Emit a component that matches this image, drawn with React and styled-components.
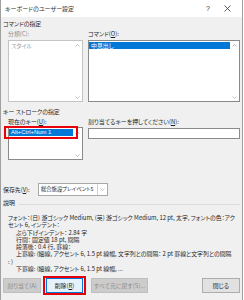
import React from "react";
import styled, { createGlobalStyle } from "styled-components";

const Global = createGlobalStyle`
  body {
    margin: 0;
    background: #ffffff;
  }
`;

// 다이얼로그 전체 틀
const Dialog = styled.div`
  width: 243px;
  height: 300px;
  box-sizing: border-box;
  display: flex;
  flex-direction: column;
  background: #f0f0f0;
  border-left: 1px solid #a0a0a0;
  border-right: 1px solid #a0a0a0;
  font-family: "Noto Sans CJK JP", "Noto Sans", sans-serif;
  font-size: 5.9px;
  font-feature-settings: "palt" 1;
  color: #1e1e1e;
  overflow: hidden;
`;

const TitleBar = styled.div`
  height: 17px;
  flex-shrink: 0;
  display: flex;
  align-items: center;
  background: #ffffff;
  padding-left: 4px;
  padding-right: 2px;
`;

const Title = styled.div`
  flex: 1;
  font-size: 6px;
  color: #333;
`;

const TitleButton = styled.div`
  width: ${(p) => p.w}px;
  height: 17px;
  display: flex;
  align-items: center;
  justify-content: center;
  color: #333;
  font-family: "Liberation Sans", sans-serif;
  font-size: 7px;
`;

const Body = styled.div`
  flex: 1;
  display: flex;
  flex-direction: column;
  padding: 0 2px;
`;

const Heading = styled.div`
  margin-top: ${(p) => p.mt}px;
  height: 8px;
  line-height: 8px;
  display: flex;
  align-items: center;
  gap: 4px;
  color: #1e1e1e;
`;

const HeadingRule = styled.div`
  flex: 1;
  height: 1px;
  margin-top: 3px;
  background: #dcdcdc;
`;

const Columns = styled.div`
  display: grid;
  grid-template-columns: 75px 152px;
  column-gap: 5px;
  padding-left: 5px;
`;

const Column = styled.div`
  display: flex;
  flex-direction: column;
`;

const Label = styled.div`
  margin-top: 2px;
  height: 8px;
  line-height: 8px;
  white-space: nowrap;
  color: ${(p) => (p.disabled ? "#8d8d8d" : "#1e1e1e")};
`;

const ListBox = styled.div`
  margin-top: ${(p) => p.mt ?? 2}px;
  height: ${(p) => p.h}px;
  box-sizing: border-box;
  display: flex;
  background: #ffffff;
  border: 1px solid ${(p) => (p.disabled ? "#c4c4c4" : "#8a8a8a")};
`;

const ListItems = styled.div`
  flex: 1;
  padding: 1px 0 0 0;
`;

const Item = styled.div`
  position: relative;
  height: 7px;
  line-height: 7px;
  padding-left: 2px;
  white-space: nowrap;
  color: ${(p) => (p.selected ? "#ffffff" : p.disabled ? "#9a9a9a" : "#1e1e1e")};
  background: ${(p) => (p.selected ? "#0078d7" : "transparent")};
  font-family: ${(p) =>
    p.latin ? '"Liberation Sans", sans-serif' : "inherit"};

  ${(p) =>
    p.marked &&
    `
    &::after {
      content: "";
      position: absolute;
      left: -5px;
      right: -5px;
      top: -3px;
      bottom: -3px;
      border: 2px solid #e8000b;
    }
  `}
`;

const ScrollBar = styled.div`
  width: 9px;
  display: flex;
  flex-direction: column;
  justify-content: space-between;
  align-items: center;
  padding: 3px 0 2px;
`;

const TextInput = styled.div`
  margin-top: 2px;
  height: 11px;
  box-sizing: border-box;
  background: #ffffff;
  border: 1px solid #8a8a8a;
`;

const SaveRow = styled.div`
  margin-top: 23px;
  display: flex;
  align-items: center;
`;

const SaveLabel = styled.div`
  width: 35px;
  white-space: nowrap;
`;

const Select = styled.div`
  width: 70px;
  height: 13px;
  box-sizing: border-box;
  display: flex;
  background: #ffffff;
  border: 1px solid #a8a8a8;
`;

const SelectText = styled.div`
  flex: 1;
  line-height: 11px;
  padding-left: 2px;
  font-size: 5.3px;
  white-space: nowrap;
`;

const SelectArrow = styled.div`
  width: 9px;
  display: flex;
  align-items: center;
  justify-content: center;
  border-left: 1px solid #d0d0d0;
`;

const Desc = styled.div`
  margin-top: 7px;
  padding-left: 5px;
  line-height: 7.3px;
`;

const DescLine = styled.div`
  padding-left: ${(p) => (p.indent ? 8 : 0)}px;
  white-space: nowrap;
`;

const ButtonRow = styled.div`
  margin-top: 6px;
  display: flex;
  align-items: center;
`;

const Button = styled.div`
  position: relative;
  width: ${(p) => p.w}px;
  height: 15px;
  box-sizing: border-box;
  margin-left: ${(p) => (p.auto ? "auto" : `${p.ml || 0}px`)};
  display: flex;
  align-items: center;
  justify-content: center;
  white-space: nowrap;
  color: ${(p) => (p.disabled ? "#8c8c8c" : "#1e1e1e")};
  background: ${(p) =>
    p.disabled ? "#cccccc" : p.focused ? "#e5f1fb" : "#e1e1e1"};
  border: 1px solid
    ${(p) => (p.disabled ? "#bfbfbf" : p.focused ? "#0078d7" : "#adadad")};

  ${(p) =>
    p.marked &&
    `
    &::after {
      content: "";
      position: absolute;
      left: -4px;
      right: -4px;
      top: -3px;
      bottom: -3px;
      border: 2px solid #e8000b;
    }
  `}
`;

const Chevron = ({ up }) => (
  <svg width="5" height="3" viewBox="0 0 5 3">
    <path
      d={up ? "M0.5 2.5 L2.5 0.5 L4.5 2.5" : "M0.5 0.5 L2.5 2.5 L4.5 0.5"}
      fill="none"
      stroke="#a6a6a6"
      strokeWidth="0.7"
    />
  </svg>
);

const Scroll = () => (
  <ScrollBar>
    <Chevron up />
    <Chevron />
  </ScrollBar>
);

const App = () => {
  return (
    <>
      <Global />
      <Dialog>
        <TitleBar>
          <Title>キーボードのユーザー設定</Title>
          <TitleButton w={14}>?</TitleButton>
          <TitleButton w={25}>
            <svg width="7" height="7" viewBox="0 0 7 7">
              <path
                d="M0.5 0.5 L6.5 6.5 M6.5 0.5 L0.5 6.5"
                stroke="#333"
                strokeWidth="0.8"
              />
            </svg>
          </TitleButton>
        </TitleBar>
        <Body>
          <Heading mt={3}>コマンドの指定</Heading>
          <Columns>
            <Column>
              <Label disabled>分類(C):</Label>
              <ListBox h={62} disabled>
                <ListItems>
                  <Item disabled>スタイル</Item>
                </ListItems>
                <Scroll />
              </ListBox>
            </Column>
            <Column>
              <Label>
                コマンド(<u>O</u>):
              </Label>
              <ListBox h={62}>
                <ListItems>
                  <Item selected>中見出し</Item>
                </ListItems>
                <Scroll />
              </ListBox>
            </Column>
          </Columns>

          <Heading mt={6}>キー ストロークの指定</Heading>
          <Columns>
            <Column>
              <Label>
                現在のキー(<u>U</u>):
              </Label>
              <ListBox h={33} mt={1}>
                <ListItems>
                  <Item selected marked latin>
                    Alt+Ctrl+Num 1
                  </Item>
                </ListItems>
                <Scroll />
              </ListBox>
            </Column>
            <Column>
              <Label>
                割り当てるキーを押してください(<u>N</u>):
              </Label>
              <TextInput />
            </Column>
          </Columns>

          <SaveRow>
            <SaveLabel>
              保存先(<u>V</u>):
            </SaveLabel>
            <Select>
              <SelectText>総合施設プレイベント5</SelectText>
              <SelectArrow>
                <Chevron />
              </SelectArrow>
            </Select>
          </SaveRow>

          <Heading mt={3}>
            説明
            <HeadingRule />
          </Heading>
          <Desc>
            <DescLine>
              フォント：(日) 游ゴシック Medium, (英) 游ゴシック Medium, 12 pt,
              太字, フォントの色：アク
            </DescLine>
            <DescLine>セント 6, インデント：</DescLine>
            <DescLine indent>ぶら下げインデント： 2.84 字</DescLine>
            <DescLine indent>行間： 固定値 18 pt, 間隔</DescLine>
            <DescLine indent>段落後： 0.4 行, 罫線：</DescLine>
            <DescLine indent>
              上罫線: (細線, アクセント 6, 1.5 pt 線幅, 文字列との間隔： 2 pt
              罫線と文字列との間隔
            </DescLine>
            <DescLine>: )</DescLine>
            <DescLine indent>下罫線: (細線, アクセント 6, 1.5 pt 線幅, ...</DescLine>
          </Desc>

          <ButtonRow>
            <Button w={38} disabled>
              割り当て(A)
            </Button>
            <Button w={37} ml={5} focused marked>
              削除(<u>R</u>)
            </Button>
            <Button w={57} ml={8} disabled>
              すべて元に戻す(S)...
            </Button>
            <Button w={38} auto>
              閉じる
            </Button>
          </ButtonRow>
        </Body>
      </Dialog>
    </>
  );
};

export default App;
